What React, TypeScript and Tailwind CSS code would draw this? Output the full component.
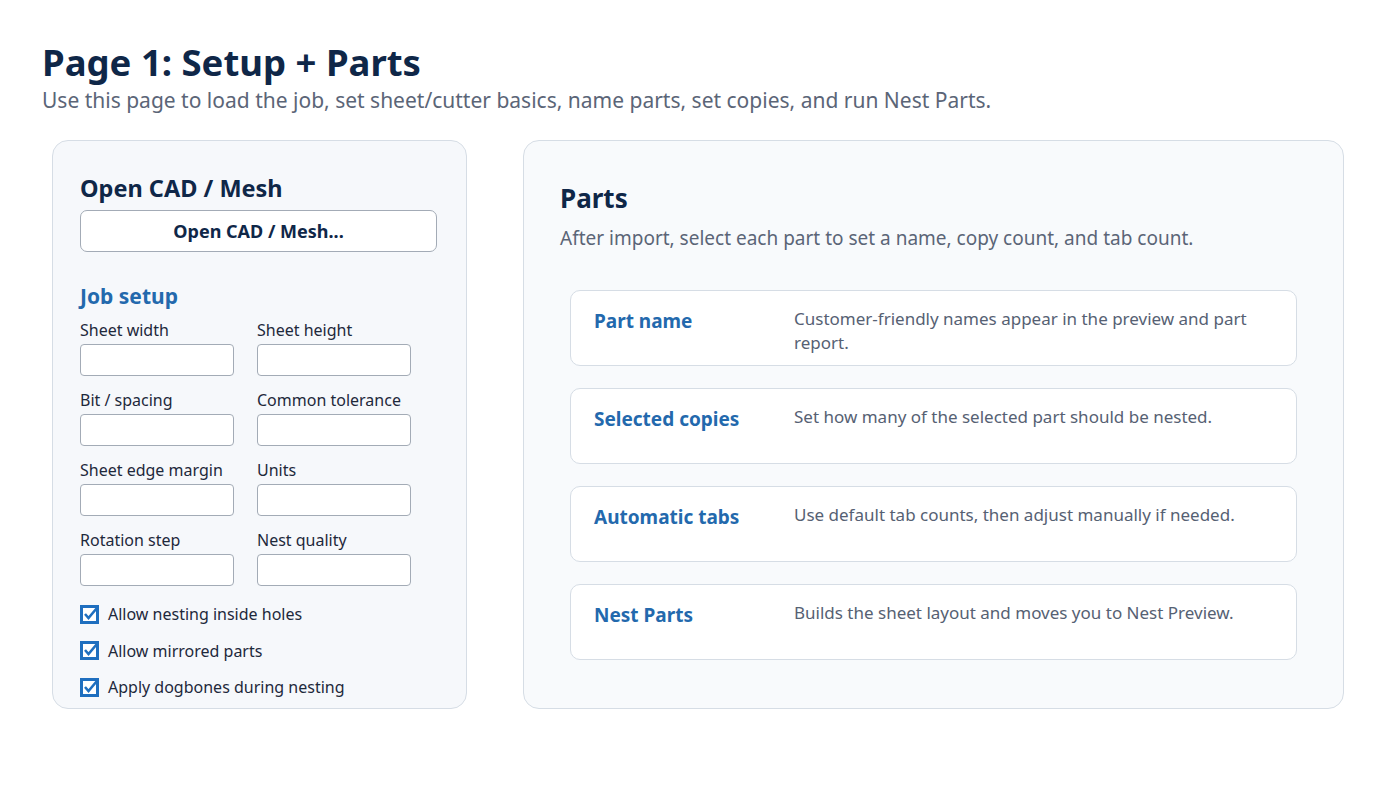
import React from "react";

const font = { fontFamily: '"Noto Sans", "Open Sans", sans-serif' };

function Check() {
  return (
    <svg width="19" height="19" viewBox="0 0 19 19" className="shrink-0">
      <rect x="0" y="0" width="19" height="19" fill="#1f6fbf" />
      <rect x="3" y="3" width="13" height="13" fill="#ffffff" />
      <path d="M5 9 L8.5 13 L16.5 3.5" stroke="#1f6fbf" strokeWidth="2.6" fill="none" />
    </svg>
  );
}

function Field({ label }: { label: string }) {
  return (
    <div className="flex flex-col">
      <div className="text-[16px] leading-[20px] text-[#1e293b]">{label}</div>
      <div className="mt-[4px] h-[32px] w-[154px] rounded-[4px] border-[1.5px] border-[#a3abb6] bg-white" />
    </div>
  );
}

function Card({ title, desc }: { title: string; desc: string }) {
  return (
    <div className="flex h-[76px] rounded-[10px] border-[1.5px] border-[#d6dde5] bg-white pl-[23px] pr-[20px] pt-[16px]">
      <div className="w-[200px] shrink-0 pt-[2px] text-[19px] font-bold leading-[24px] text-[#2369ad]">{title}</div>
      <div className="text-[17px] leading-[24px] text-[#566173]">{desc}</div>
    </div>
  );
}

export default function App() {
  const fields = [
    ["Sheet width", "Sheet height"],
    ["Bit / spacing", "Common tolerance"],
    ["Sheet edge margin", "Units"],
    ["Rotation step", "Nest quality"],
  ];
  const checks = ["Allow nesting inside holes", "Allow mirrored parts", "Apply dogbones during nesting"];
  const cards: [string, string][] = [
    ["Part name", "Customer-friendly names appear in the preview and part report."],
    ["Selected copies", "Set how many of the selected part should be nested."],
    ["Automatic tabs", "Use default tab counts, then adjust manually if needed."],
    ["Nest Parts", "Builds the sheet layout and moves you to Nest Preview."],
  ];
  return (
    <div className="min-h-[793px] w-[1400px] bg-white" style={font}>
      <div className="px-[42px] pt-[38px]">
        <h1 className="text-[36.5px] font-bold leading-[48px] text-[#0f2748]">Page 1: Setup + Parts</h1>
        <p className="text-[21px] leading-[28px] text-[#5b6577]">
          Use this page to load the job, set sheet/cutter basics, name parts, set copies, and run Nest Parts.
        </p>
      </div>
      <div className="mt-[26px] flex gap-[56px] pl-[52px]">
        <div className="h-[569px] w-[415px] rounded-[16px] border-[1.5px] border-[#d6dde5] bg-[#f6f8fb] px-[27px] pt-[32px]">
          <h2 className="text-[23.5px] font-bold leading-[30px] text-[#0f2748]">Open CAD / Mesh</h2>
          <div className="mt-[7px] flex h-[42px] w-[357px] items-center justify-center rounded-[7px] border-[1.5px] border-[#a3abb6] bg-white text-[18px] font-bold text-[#0f2748]">
            Open CAD / Mesh...
          </div>
          <h3 className="mt-[30px] text-[21px] font-bold leading-[28px] text-[#2369ad]">Job setup</h3>
          <div className="mt-[10px] flex flex-col gap-[14px]">
            {fields.map(([a, b]) => (
              <div key={a} className="flex gap-[23px]">
                <Field label={a} />
                <Field label={b} />
              </div>
            ))}
          </div>
          <div className="mt-[17px] flex flex-col gap-[14.5px]">
            {checks.map((c) => (
              <div key={c} className="flex items-center gap-[9px]">
                <Check />
                <span className="text-[16px] leading-[22px] text-[#1e293b]">{c}</span>
              </div>
            ))}
          </div>
        </div>
        <div className="h-[569px] w-[821px] rounded-[16px] border-[1.5px] border-[#d6dde5] bg-[#f8fafc] pl-[36px] pr-[46px] pt-[40px]">
          <h2 className="text-[26px] font-bold leading-[34px] text-[#0f2748]">Parts</h2>
          <p className="mt-[10px] text-[19px] leading-[26px] text-[#5b6577]">
            After import, select each part to set a name, copy count, and tab count.
          </p>
          <div className="mt-[39px] ml-[10px] flex flex-col gap-[22px]">
            {cards.map(([t, d]) => (
              <Card key={t} title={t} desc={d} />
            ))}
          </div>
        </div>
      </div>
    </div>
  );
}
